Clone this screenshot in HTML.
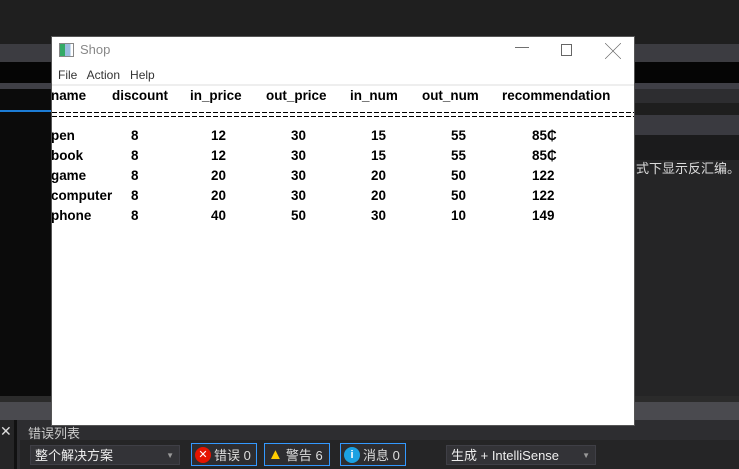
<!DOCTYPE html>
<html><head><meta charset="utf-8"><style>
body{margin:0;width:739px;height:469px;position:relative;overflow:hidden;background:#1e1e1e;font-family:"Liberation Sans","Noto Sans CJK SC",sans-serif}
.a{position:absolute}
.t{position:absolute;font:bold 14px "Liberation Sans",sans-serif;color:#000;transform:scaleX(.96);transform-origin:0 0;white-space:nowrap}
.btn{position:absolute;top:443px;height:23px;border:1px solid #3399ff;background:#2d2d30;color:#ddd;font-size:13px;display:flex;align-items:center;box-sizing:border-box;white-space:nowrap}
.ic{display:inline-block;width:16px;height:16px;border-radius:50%;color:#fff;font-size:11px;line-height:16px;text-align:center;margin:0 3px;flex:none}
</style></head><body>
<div class="a" style="left:0;top:0;width:739px;height:44px;background:#1f1f1f"></div>
<div class="a" style="left:0;top:44px;width:739px;height:18px;background:#3c3c41"></div>
<div class="a" style="left:0;top:62px;width:739px;height:21px;background:#050505"></div>
<div class="a" style="left:0;top:83px;width:739px;height:6px;background:#3f3f46"></div>
<div class="a" style="left:0;top:89px;width:51px;height:307px;background:#0b0b0b"></div>
<div class="a" style="left:0;top:110px;width:51px;height:2px;background:#1c7cd5"></div>
<div class="a" style="left:635px;top:89px;width:104px;height:14px;background:#2d2d30"></div>
<div class="a" style="left:635px;top:103px;width:104px;height:12px;background:#1e1e1e"></div>
<div class="a" style="left:635px;top:115px;width:104px;height:20px;background:#3a3a40"></div>
<div class="a" style="left:635px;top:135px;width:104px;height:25px;background:#1b1b1c"></div>
<div class="a" style="left:635px;top:160px;width:104px;height:236px;background:#252526"></div>
<div class="a" style="left:636px;top:158px;color:#ddd;font-size:13px;font-family:'WenQuanYi Zen Hei',sans-serif;white-space:nowrap">式下显示反汇编。</div>
<div class="a" style="left:0;top:396px;width:739px;height:6px;background:#2b2b2b"></div>
<div class="a" style="left:0;top:402px;width:739px;height:18px;background:#4a4a4f"></div>
<div class="a" style="left:0;top:420px;width:739px;height:49px;background:#2d2d30"></div>
<div class="a" style="left:0;top:420px;width:14px;height:49px;background:#252526;color:#ddd;font-size:14px;line-height:22px">✕</div>
<div class="a" style="left:14px;top:420px;width:3px;height:49px;background:#111"></div>
<div class="a" style="left:28px;top:423px;color:#ccc;font-size:13px">错误列表</div>
<div class="a" style="left:20px;top:440px;width:719px;height:29px;background:#252526"></div>
<div class="a" style="left:30px;top:445px;width:150px;height:20px;background:#333337;border:1px solid #3f3f46;color:#eee;font-size:13px;line-height:20px;padding-left:4px;box-sizing:border-box">整个解决方案<span style="position:absolute;right:5px;color:#999;font-size:8px">▼</span></div>
<div class="btn" style="left:191px;width:66px"><span class="ic" style="background:#e51400">✕</span>错误 0</div>
<div class="btn" style="left:264px;width:66px"><span style="color:#fc0;font-size:15px;margin:0 3px">▲</span>警告 6</div>
<div class="btn" style="left:340px;width:66px"><span class="ic" style="background:#1ba1e2;font-weight:bold">i</span>消息 0</div>
<div class="a" style="left:446px;top:445px;width:150px;height:20px;background:#333337;border:1px solid #3f3f46;color:#eee;font-size:13px;line-height:20px;padding-left:4px;box-sizing:border-box">生成 + IntelliSense<span style="position:absolute;right:5px;color:#999;font-size:8px">▼</span></div>

<div class="a" style="left:51px;top:36px;width:584px;height:390px;background:#fff;border:1px solid #555;box-sizing:border-box"></div>
<div class="a" style="left:59px;top:43px;width:13px;height:12px;background:linear-gradient(90deg,#3a6 0 40%,#9bd 40% 80%,#fff 80%);border:1px solid #888"></div>
<div class="a" style="left:80px;top:42px;color:#888;font-size:13px">Shop</div>
<div class="a" style="left:515px;top:38px;color:#666;font-size:14px">—</div>
<div class="a" style="left:561px;top:44px;width:9px;height:10px;border:1px solid #666"></div>
<div class="a" style="left:605px;top:38px;color:#666;font-size:16px">╳</div>
<div class="a" style="left:58px;top:68px;color:#333;font-size:12px">File&nbsp;&nbsp; Action&nbsp;&nbsp; Help</div>
<div class="a" style="left:52px;top:84px;width:582px;height:2px;background:#eee"></div>

<div class="t" style="left:51px;top:87px">name</div>
<div class="t" style="left:112px;top:87px">discount</div>
<div class="t" style="left:190px;top:87px">in_price</div>
<div class="t" style="left:266px;top:87px">out_price</div>
<div class="t" style="left:350px;top:87px">in_num</div>
<div class="t" style="left:422px;top:87px">out_num</div>
<div class="t" style="left:502px;top:87px">recommendation</div>
<div class="a" style="left:52px;top:112px;width:582px;height:1px;background:repeating-linear-gradient(90deg,#000 0 5px,transparent 5px 7px)"></div>
<div class="a" style="left:52px;top:116px;width:582px;height:1px;background:repeating-linear-gradient(90deg,#000 0 5px,transparent 5px 7px)"></div>

<div class="t" style="left:51px;top:127px">pen</div>
<div class="t" style="left:51px;top:147px">book</div>
<div class="t" style="left:51px;top:167px">game</div>
<div class="t" style="left:51px;top:187px">computer</div>
<div class="t" style="left:51px;top:207px">phone</div>

<div class="t" style="left:131px;top:127px">8</div><div class="t" style="left:211px;top:127px">12</div><div class="t" style="left:291px;top:127px">30</div><div class="t" style="left:371px;top:127px">15</div><div class="t" style="left:451px;top:127px">55</div><div class="t" style="left:532px;top:127px">85₵</div>
<div class="t" style="left:131px;top:147px">8</div><div class="t" style="left:211px;top:147px">12</div><div class="t" style="left:291px;top:147px">30</div><div class="t" style="left:371px;top:147px">15</div><div class="t" style="left:451px;top:147px">55</div><div class="t" style="left:532px;top:147px">85₵</div>
<div class="t" style="left:131px;top:167px">8</div><div class="t" style="left:211px;top:167px">20</div><div class="t" style="left:291px;top:167px">30</div><div class="t" style="left:371px;top:167px">20</div><div class="t" style="left:451px;top:167px">50</div><div class="t" style="left:532px;top:167px">122</div>
<div class="t" style="left:131px;top:187px">8</div><div class="t" style="left:211px;top:187px">20</div><div class="t" style="left:291px;top:187px">30</div><div class="t" style="left:371px;top:187px">20</div><div class="t" style="left:451px;top:187px">50</div><div class="t" style="left:532px;top:187px">122</div>
<div class="t" style="left:131px;top:207px">8</div><div class="t" style="left:211px;top:207px">40</div><div class="t" style="left:291px;top:207px">50</div><div class="t" style="left:371px;top:207px">30</div><div class="t" style="left:451px;top:207px">10</div><div class="t" style="left:532px;top:207px">149</div>
</body></html>
